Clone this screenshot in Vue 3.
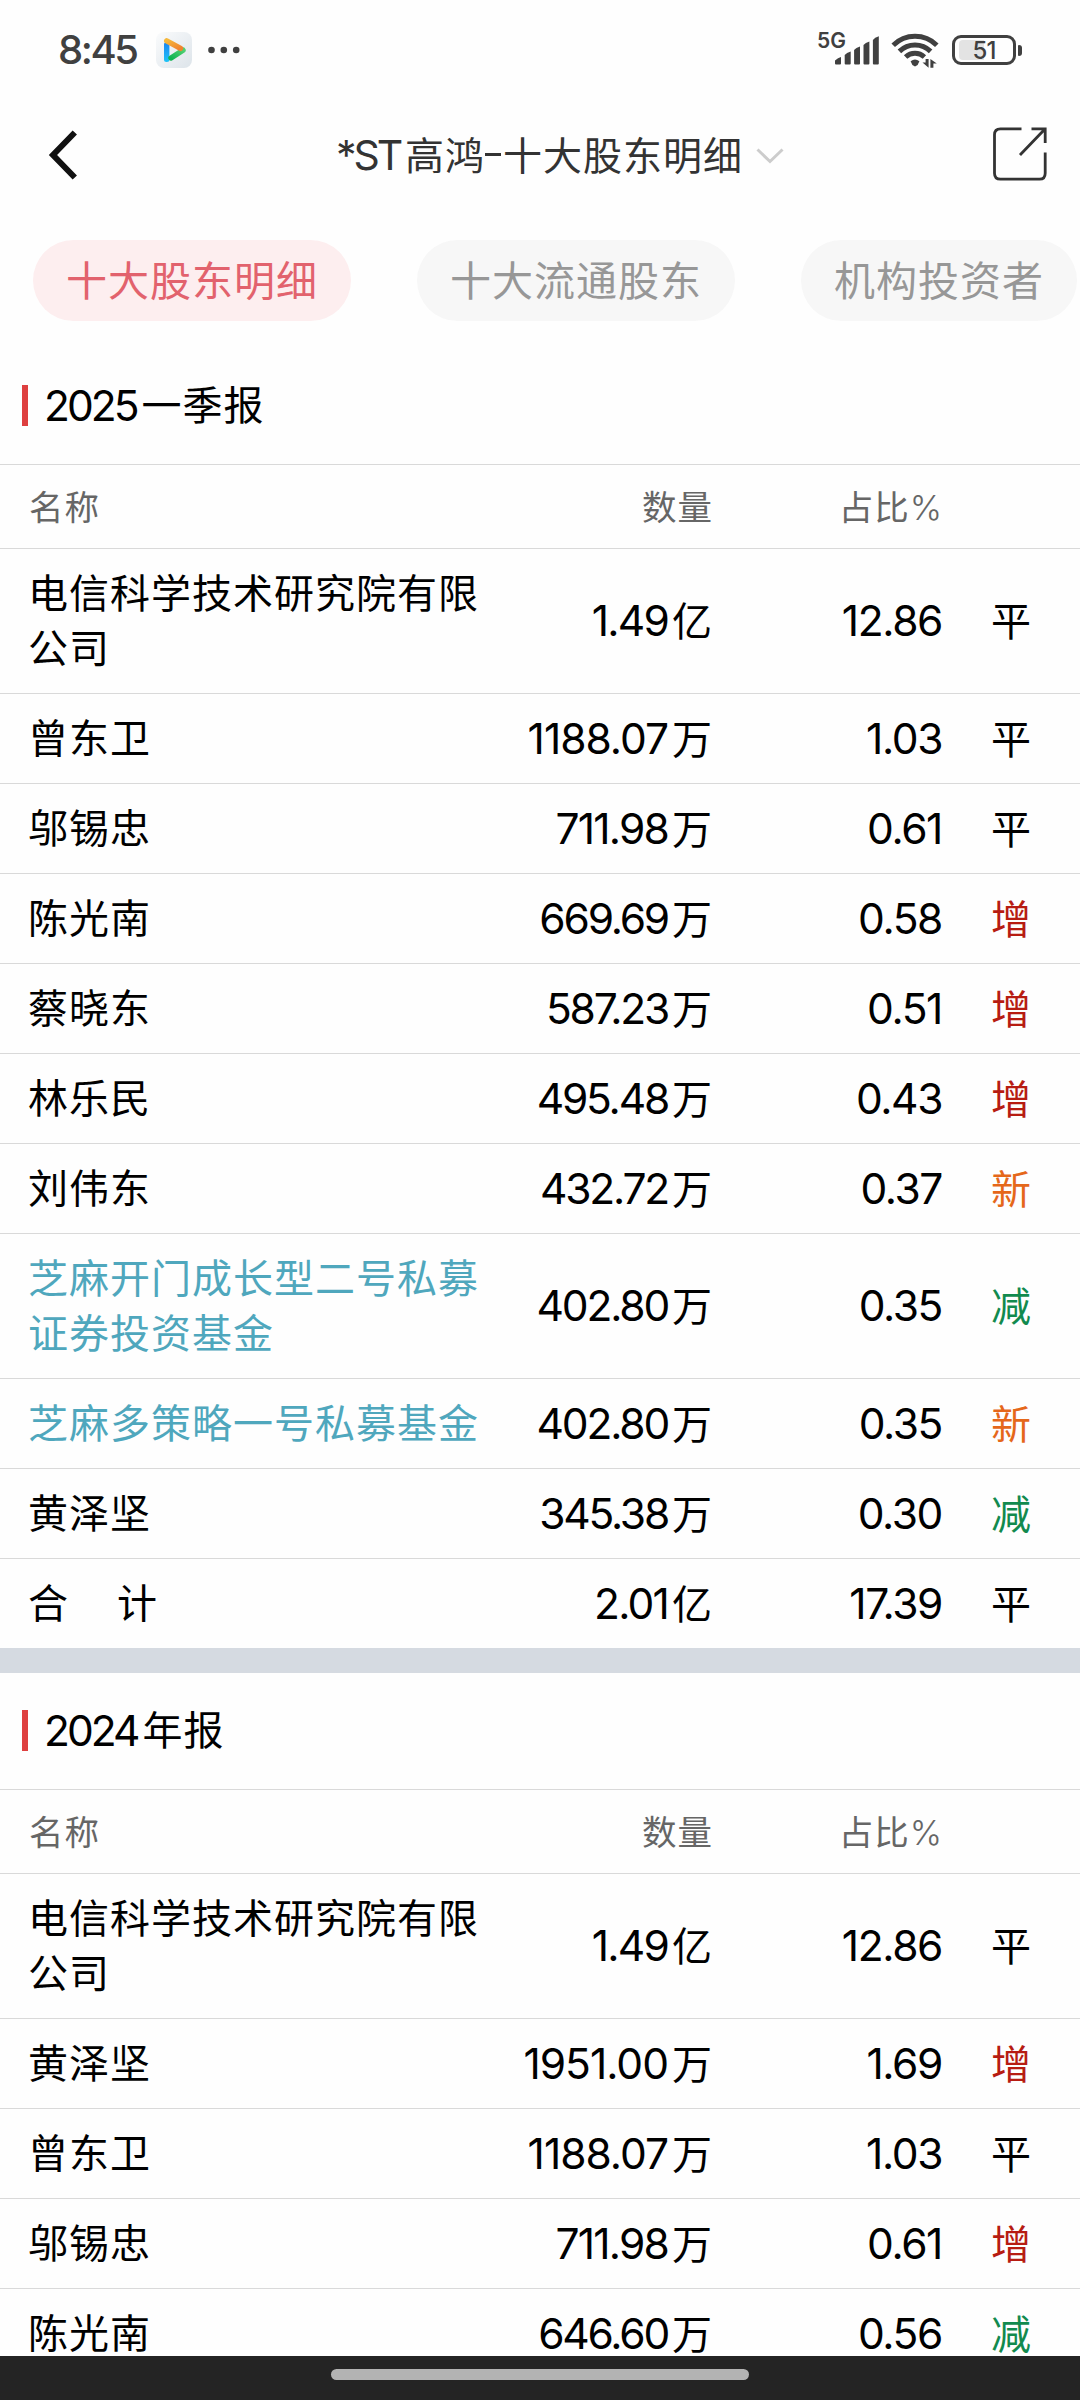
<script setup>
const tabs = ['十大股东明细', '十大流通股东', '机构投资者']

const trendClass = { 平: 'flat', 增: 'up', 减: 'down', 新: 'fresh' }

const reports = [
  {
    title: [['n', '2025'], ['c', '一季报']],
    rows: [
      ['电信科学技术研究院有限公司', '1.49', '亿', '12.86', '平'],
      ['曾东卫', '1188.07', '万', '1.03', '平'],
      ['邬锡忠', '711.98', '万', '0.61', '平'],
      ['陈光南', '669.69', '万', '0.58', '增'],
      ['蔡晓东', '587.23', '万', '0.51', '增'],
      ['林乐民', '495.48', '万', '0.43', '增'],
      ['刘伟东', '432.72', '万', '0.37', '新'],
      ['芝麻开门成长型二号私募证券投资基金', '402.80', '万', '0.35', '减', true],
      ['芝麻多策略一号私募基金', '402.80', '万', '0.35', '新', true],
      ['黄泽坚', '345.38', '万', '0.30', '减'],
      ['合计', '2.01', '亿', '17.39', '平'],
    ],
  },
  {
    title: [['n', '2024'], ['c', '年报']],
    rows: [
      ['电信科学技术研究院有限公司', '1.49', '亿', '12.86', '平'],
      ['黄泽坚', '1951.00', '万', '1.69', '增'],
      ['曾东卫', '1188.07', '万', '1.03', '平'],
      ['邬锡忠', '711.98', '万', '0.61', '增'],
      ['陈光南', '646.60', '万', '0.56', '减'],
    ],
  },
]
</script>

<template>
  <div class="screen">
    <header class="status">
      <div class="status-left">
        <span class="clock">8:45</span>
        <svg class="app" width="36" height="36" viewBox="0 0 36 36">
          <defs>
            <linearGradient id="tile" x1="0" y1="0" x2="1" y2="1">
              <stop offset="0" stop-color="#fafbfc" /><stop offset="1" stop-color="#dde4ea" />
            </linearGradient>
            <linearGradient id="warm" x1="0" y1="0" x2="1" y2="1">
              <stop offset="0" stop-color="#f5b73a" /><stop offset="1" stop-color="#f0822f" />
            </linearGradient>
            <linearGradient id="cool" x1="0" y1="0" x2="0" y2="1">
              <stop offset="0" stop-color="#1b84f0" /><stop offset="1" stop-color="#1ec3f7" />
            </linearGradient>
            <linearGradient id="leaf" x1="0" y1="1" x2="1" y2="0">
              <stop offset="0" stop-color="#10b552" /><stop offset="1" stop-color="#4fcf70" />
            </linearGradient>
          </defs>
          <rect width="36" height="36" rx="8" fill="url(#tile)" />
          <rect x="8" y="10" width="5.4" height="20" rx="2.5" fill="url(#cool)" />
          <path d="M15 26L27 18.2" stroke="url(#leaf)" stroke-width="5.4" stroke-linecap="round" />
          <path d="M10.7 8.8L24.5 16.3" stroke="url(#warm)" stroke-width="5.4" stroke-linecap="round" />
        </svg>
        <svg class="dots" width="32" height="8" viewBox="0 0 32 8" fill="#404040">
          <circle cx="3.5" cy="4" r="3.3" /><circle cx="15.8" cy="4" r="3.3" /><circle cx="28.2" cy="4" r="3.3" />
        </svg>
      </div>
      <div class="status-right">
        <span class="net">5G</span>
        <svg class="signal" width="44" height="30" viewBox="0 0 44 30" fill="#404040">
          <path d="M0 28.5V25.5Q3 22.5 6 22V28.5Q6 29.5 5 29.5H1Q0 29.5 0 28.5Z" />
          <path d="M9.7 28.5V20Q11.5 17.5 15.7 16.5V28.5Q15.7 29.5 14.7 29.5H10.7Q9.7 29.5 9.7 28.5Z" />
          <path d="M19.1 28.5V15Q20.9 12.5 25 11.5V28.5Q25 29.5 24 29.5H20.1Q19.1 29.5 19.1 28.5Z" />
          <path d="M28.5 28.5V10Q30.3 7.5 34.4 6.5V28.5Q34.4 29.5 33.4 29.5H29.5Q28.5 29.5 28.5 28.5Z" />
          <path d="M37.9 28.5V5Q39.7 2.5 43.8 1.3V28.5Q43.8 29.5 42.8 29.5H38.9Q37.9 29.5 37.9 28.5Z" />
        </svg>
        <svg class="wifi" width="48" height="36" viewBox="0 0 48 36" fill="none" stroke="#404040" stroke-width="5">
          <path d="M2.2 13.2A31 31 0 0 1 45.8 13.2" />
          <path d="M8.4 19.4A22.3 22.3 0 0 1 39.6 19.4" />
          <path d="M14.6 25A14 14 0 0 1 33.4 25" />
          <path d="M19.6 29.2Q24 25.8 28.4 29.2Q27.5 33 24 34.6Q20.5 33 19.6 29.2Z" fill="#404040" stroke="none" />
          <path d="M37.6 27V35.8L31.5 30.6H34.6V27ZM39.4 35.8V27L45.8 31.6H42.4V35.8Z" fill="#404040" stroke="none" />
        </svg>
        <div class="battery"><i class="level"></i><span>51</span></div>
        <i class="nub"></i>
      </div>
    </header>

    <nav class="bar">
      <svg width="30" height="50" viewBox="0 0 30 50" fill="none" stroke="#111" stroke-width="6">
        <path d="M26.8 2.5L5 25L26.8 47.5" />
      </svg>
      <h1><span class="latin">*ST</span><span class="word">高鸿</span><span class="dash"></span><span class="word">十大股东明细</span>
        <svg width="28" height="16" viewBox="0 0 28 16" fill="none" stroke="#ccc" stroke-width="3">
          <path d="M1.5 1.5L14 13.5L26.5 1.5" />
        </svg>
      </h1>
      <svg class="share" width="54" height="54" viewBox="0 0 54 54" fill="none" stroke="#333" stroke-width="2.8">
        <path d="M28.5 1.8H7.5Q1.5 1.8 1.5 7.8V46.2Q1.5 52.2 7.5 52.2H46.5Q52.2 52.2 52.2 46.2V25.5" />
        <path d="M38.5 1.8H52.2V16M52.2 1.8L27 28" />
      </svg>
    </nav>

    <div class="tabs">
      <div v-for="(t, i) in tabs" :key="t" class="tab" :class="{ active: i === 0 }">{{ t }}</div>
    </div>

    <main>
      <section v-for="(r, k) in reports" :key="k">
        <h2><i></i><span v-for="p in r.title" :key="p[1]" :class="p[0] === 'n' ? 'num' : 'cjk'">{{ p[1] }}</span></h2>
        <div class="row head">
          <div class="name">名称</div>
          <div class="qty">数量</div>
          <div class="pct">占比<span class="sign">%</span></div>
          <div class="trend"></div>
        </div>
        <div v-for="row in r.rows" :key="row[0]" class="row">
          <div class="name" :class="{ link: row[5], sum: row[0] === '合计' }">{{ row[0] }}</div>
          <div class="qty"><span class="num" :class="{ long: row[1].length > 6, mid: row[1].length === 6 && !row[1].includes('11') }">{{ row[1] }}</span><span class="unit">{{ row[2] }}</span></div>
          <div class="pct"><span class="num">{{ row[3] }}</span></div>
          <div class="trend" :class="trendClass[row[4]]">{{ row[4] }}</div>
        </div>
      </section>
    </main>

    <footer><i></i></footer>
  </div>
</template>

<style>
body { margin: 0; overflow: hidden; }
</style>

<style scoped>
.screen {
  width: 1080px;
  height: 2400px;
  overflow: hidden;
  display: flex;
  flex-direction: column;
  background: #fefefe;
  color: #000;
  font-family: "Noto Sans CJK SC", sans-serif;
}
svg { display: block; flex: none; }
.status {
  flex: none;
  height: 100px;
  box-sizing: border-box;
  padding: 0 58px 0 58px;
  display: flex;
  justify-content: space-between;
  align-items: center;
  color: #404040;
  font-family: Inter, sans-serif;
}
.status-left, .status-right { display: flex; align-items: center; }
.clock { width: 98px; font-size: 40px; font-weight: 500; letter-spacing: -2.4px; line-height: 48px; white-space: nowrap; }
.dots { margin-left: 16px; }
.net { font-size: 21px; font-weight: 600; line-height: 20px; margin-bottom: 18px; margin-right: -11px; }
.wifi { margin-left: 12px; }
.battery {
  position: relative;
  margin-left: 13px;
  width: 64px;
  height: 30px;
  box-sizing: border-box;
  border: 3.3px solid #404040;
  border-radius: 9px;
  display: flex;
  align-items: center;
  justify-content: center;
  font-size: 24px;
  font-weight: 500;
  letter-spacing: -0.8px;
}
.battery span { position: relative; }
.level { position: absolute; left: 4px; top: 2px; bottom: 2px; width: 25px; background: #e3e3e3; border-radius: 4px 0 0 4px; }
.nub { width: 4px; height: 11px; margin-left: 2px; border-radius: 1px 3px 3px 1px; background: #404040; }

.bar {
  flex: none;
  height: 109px;
  box-sizing: border-box;
  padding: 0 33px 0 48px;
  display: flex;
  align-items: center;
}
h1 {
  margin: 0 auto 0 258px;
  display: flex;
  align-items: center;
  color: #333;
  font-size: 39px;
  font-weight: 400;
  line-height: 56px;
  letter-spacing: 1px;
  white-space: nowrap;
}
h1 svg { margin: 2px 0 0 13px; }
.share { margin-bottom: 2px; }
.word { margin-bottom: 3px; }
.latin { width: 69px; font-family: Inter, sans-serif; font-weight: 400; font-size: 41px; letter-spacing: -3px; }
.dash { width: 16px; height: 3px; background: #333; margin: 0 2px 0 0; }

.tabs { flex: none; display: flex; gap: 66px; padding: 31px 0 27px 33px; }
.tab {
  flex: none;
  height: 81px;
  padding: 0 33px;
  border-radius: 41px;
  background: #f7f7f7;
  color: #979797;
  font-size: 41px;
  letter-spacing: 1px;
  line-height: 77px;
}
.tab.active { background: #fdeeef; color: #e2626d; }

main { flex: 1; min-height: 0; overflow: hidden; }
section + section { border-top: 25px solid #d5dae1; }
h2 {
  margin: 0;
  height: 116px;
  box-sizing: border-box;
  padding: 0 0 1px 22px;
  display: flex;
  align-items: center;
  font-size: 40px;
  font-weight: 400;
  letter-spacing: 1px;
}
h2 i { width: 6px; height: 41px; background: #de4040; margin-right: 16px; }
h2 .cjk { margin: 0 0 5px 5px; }
.num { font-family: Inter, sans-serif; font-weight: 400; font-size: 42.5px; letter-spacing: -1.8px; line-height: 0; }
.num.long { letter-spacing: -1px; }
.num.mid { letter-spacing: -2.2px; }
h2 .num { letter-spacing: -3px; }
.row {
  display: grid;
  grid-template-columns: 459px 226px 229px 90px;
  align-items: center;
  min-height: 89px;
  padding: 0 48px 0 28px;
  border-top: 1px solid #d9d9d9;
  font-size: 40px;
  letter-spacing: 1px;
  line-height: 55px;
}
.row > div { margin-bottom: 3px; }
.row > .name { margin: 15px 0 19px; }
.row.head { height: 83px; min-height: 0; font-size: 34.5px; color: #666; }
.row.head > .name { margin: 0 0 3px 1px; }
.sign { font-family: Inter, sans-serif; font-weight: 350; line-height: 0; letter-spacing: 0; }
.qty, .pct, .trend { text-align: right; white-space: nowrap; }
.pct .num { letter-spacing: -1.4px; }
.unit { margin-left: 4px; }
.link { color: #4fa7bd; }
.sum::first-letter { letter-spacing: 49px; }
.up { color: #b71c12; }
.down { color: #128a4e; }
.fresh { color: #e5671a; }

footer { flex: none; height: 44px; background: #242424; display: flex; justify-content: center; }
footer i { margin-top: 13px; width: 418px; height: 11px; border-radius: 6px; background: #b3b3b3; }
</style>
